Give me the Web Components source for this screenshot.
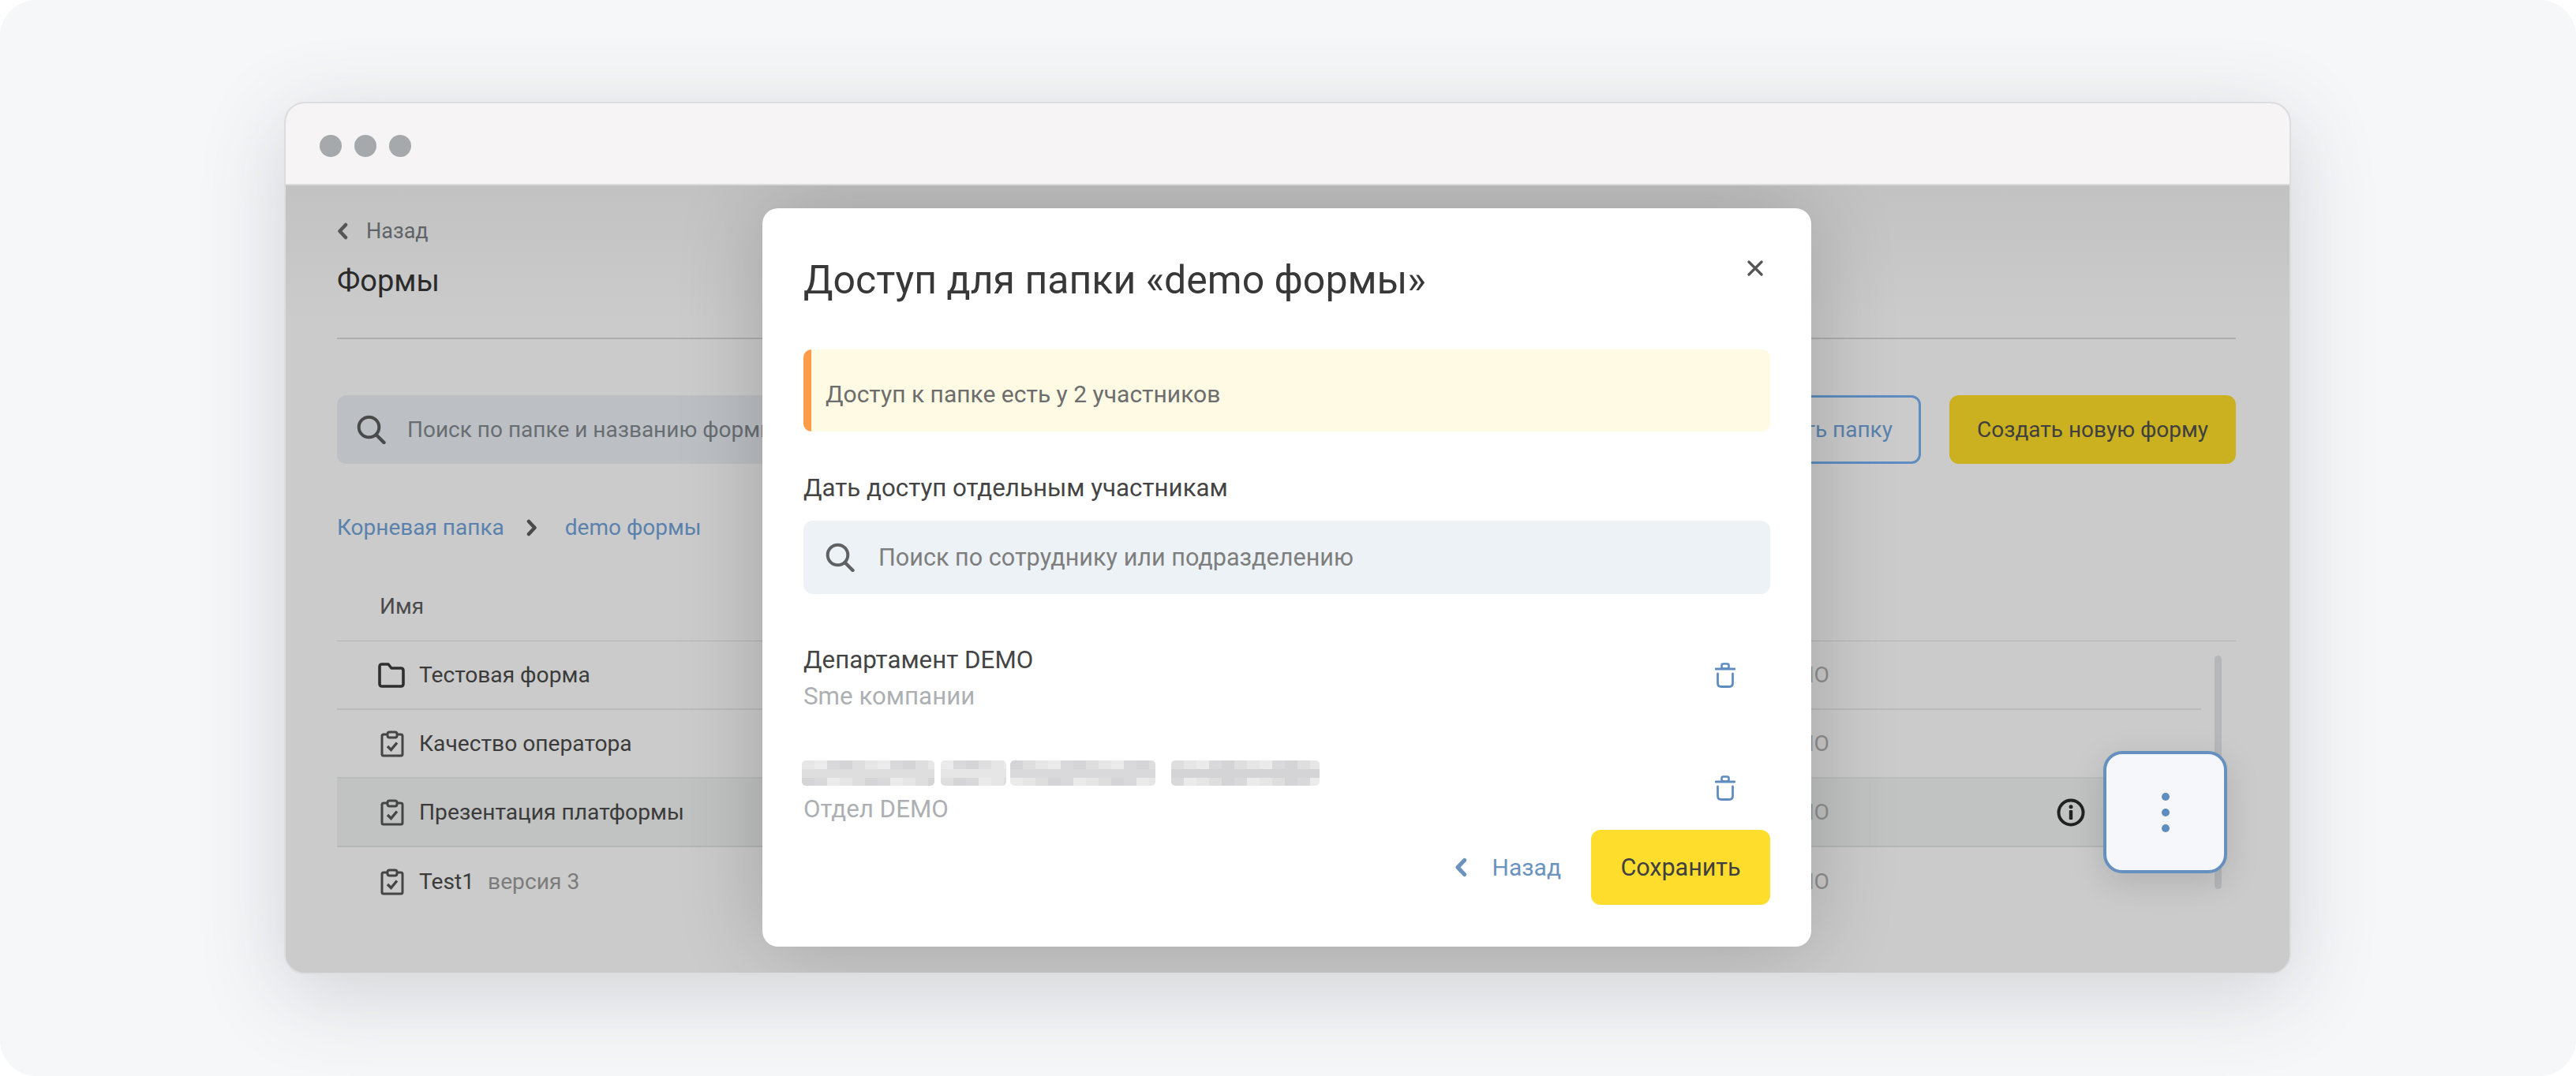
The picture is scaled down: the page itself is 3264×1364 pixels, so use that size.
<!DOCTYPE html>
<html lang="ru">
<head>
<meta charset="utf-8">
<title>Доступ для папки</title>
<style>
  html, body { margin: 0; background: #fff; }
  body { font-family: Roboto, "Liberation Sans", sans-serif; }
</style>
</head>
<body>
<demo-frame>
  <browser-window>
    <forms-page>
      <access-dialog></access-dialog>
      <more-button></more-button>
    </forms-page>
  </browser-window>
</demo-frame>

<script>
// shared icons
const icons = {
  chevronLeft: (c, w = 14, h = 22) => `<svg width="${w}" height="${h}" viewBox="0 0 14 22"><path d="M11 3 L3.5 11 L11 19" fill="none" stroke="${c}" stroke-width="4.5" stroke-linecap="round" stroke-linejoin="round"/></svg>`,
  chevronRight: (c) => `<svg width="14" height="22" viewBox="0 0 14 22"><path d="M3 3 L10.5 11 L3 19" fill="none" stroke="${c}" stroke-width="4.5" stroke-linecap="round" stroke-linejoin="round"/></svg>`,
  search: (c) => `<svg width="37" height="37" viewBox="0 0 37 37"><circle cx="15.5" cy="15.5" r="12.8" fill="none" stroke="${c}" stroke-width="4"/><path d="M24.5 25 L34.5 35" stroke="${c}" stroke-width="4.4" stroke-linecap="round"/></svg>`,
  folder: `<svg width="34" height="32" viewBox="0 0 34 32"><path d="M2 5 Q2 2 5 2 H13 L17 7 H29 Q32 7 32 10 V27 Q32 30 29 30 H5 Q2 30 2 27 Z" fill="none" stroke="#2f2f2f" stroke-width="3.6" stroke-linejoin="round"/></svg>`,
  clipboard: `<svg width="30" height="34" viewBox="0 0 30 34" style="margin-left:3px"><path d="M9 5 H4 Q2 5 2 7 V30 Q2 32 4 32 H26 Q28 32 28 30 V7 Q28 5 26 5 H21" fill="none" stroke="#454545" stroke-width="3"/><rect x="9" y="2" width="12" height="7" rx="2.5" fill="none" stroke="#454545" stroke-width="3"/><path d="M9 20 L13.5 24.5 L21 15.5" fill="none" stroke="#454545" stroke-width="3.4"/></svg>`,
  info: `<svg width="36" height="36" viewBox="0 0 36 36"><circle cx="18" cy="18" r="15.5" fill="none" stroke="#222" stroke-width="4"/><circle cx="18" cy="10.8" r="2.5" fill="#222"/><rect x="15.8" y="15" width="4.4" height="12" rx="1" fill="#222"/></svg>`,
  trash: `<svg width="26" height="32" viewBox="0 0 26 32"><rect x="8.5" y="1.5" width="9" height="6" rx="2" fill="none" stroke="#5f8dc0" stroke-width="2.6"/><path d="M1 8 H25" stroke="#5f8dc0" stroke-width="2.8" stroke-linecap="round"/><path d="M3.5 14 V26 Q3.5 30.5 8 30.5 H18 Q22.5 30.5 22.5 26 V14" fill="none" stroke="#5f8dc0" stroke-width="2.8" stroke-linecap="round"/></svg>`,
  close: `<svg width="20" height="20" viewBox="0 0 20 20"><path d="M2 2 L18 18 M18 2 L2 18" stroke="#555" stroke-width="3.2" stroke-linecap="round"/></svg>`
};

class DemoFrame extends HTMLElement {
  constructor() {
    super();
    this.attachShadow({ mode: "open" });
    this.shadowRoot.innerHTML = `
      <style>
        :host {
          display: block;
          box-sizing: border-box;
          width: 3264px;
          height: 1364px;
          padding: 129px 0 0 360px;
          background: #f6f7f9;
          border-radius: 46px;
          overflow: hidden;
        }
      </style>
      <slot></slot>
    `;
  }
}

class BrowserWindow extends HTMLElement {
  constructor() {
    super();
    this.attachShadow({ mode: "open" });
    this.shadowRoot.innerHTML = `
      <style>
        :host {
          display: flex;
          flex-direction: column;
          box-sizing: border-box;
          width: 2543px;
          height: 1106px;
          border: 2px solid #dcdde0;
          border-radius: 26px;
          overflow: hidden;
          background: #cbcbcb;
          box-shadow: 0 24px 110px rgba(60, 65, 75, 0.2);
        }
        .bar {
          flex: none;
          box-sizing: border-box;
          height: 104px;
          padding: 6px 0 0 43px;
          display: flex;
          align-items: center;
          gap: 16px;
          background: #f6f4f5;
          border-bottom: 2px solid #dbdbdb;
        }
        .bar i { width: 28px; height: 28px; border-radius: 50%; background: #a6a9ac; }
      </style>
      <div class="bar"><i></i><i></i><i></i></div>
      <slot></slot>
    `;
  }
}

class FormsPage extends HTMLElement {
  constructor() {
    super();
    this.attachShadow({ mode: "open" });
    this.shadowRoot.innerHTML = `
      <style>
        :host {
          display: block;
          position: relative;
          flex: 1;
          box-sizing: border-box;
          padding: 41px 68px 0 65px;
          overflow: hidden;
          font: 400 28px/40px Roboto, "Liberation Sans", sans-serif;
          color: #3b3b3b;
          background: linear-gradient(#c1c2c1, #cbcbcb 170px);
        }
        .back { display: flex; align-items: center; gap: 23px; height: 34px; color: #5e6468; font-size: 27px; }
        h1 {
          margin: 22px 0 0;
          padding-bottom: 48px;
          border-bottom: 2px solid #aeaeae;
          font: 400 38px/48px Roboto, "Liberation Sans", sans-serif;
          color: #2b2b2b;
        }
        .tools { display: flex; gap: 36px; margin-top: 71px; height: 87px; }
        .search {
          flex: 1;
          display: flex;
          align-items: center;
          gap: 27px;
          padding-left: 25px;
          background: #bcc0c4;
          border-radius: 12px;
          color: #686d72;
          white-space: nowrap;
          overflow: hidden;
        }
        .btn {
          display: flex;
          align-items: center;
          justify-content: center;
          box-sizing: border-box;
          border-radius: 12px;
          white-space: nowrap;
        }
        .outline { padding: 0 33px; border: 3px solid #5f8dc0; color: #5a82ad; }
        .primary { width: 363px; background: #cbb020; color: #3f3f3f; }
        .crumbs { display: flex; align-items: center; margin-top: 61px; color: #5a82ad; }
        .crumbs svg { margin: 0 35px 0 28px; }
        .head {
          margin-top: 60px;
          padding: 0 0 23px 54px;
          border-bottom: 1.5px solid #b3b3b3;
          color: #4a4a4a;
        }
        .body { display: flex; }
        .rows { width: 2362px; }
        .scroll {
          flex: none;
          width: 9px;
          height: 296px;
          margin: 18px 0 0 17px;
          border-radius: 5px;
          background: #b5b7b8;
        }
      </style>
      <div class="back">${icons.chevronLeft("#555")}<span>Назад</span></div>
      <h1>Формы</h1>
      <div class="tools">
        <div class="search">${icons.search("#4a4a4a")}<span>Поиск по папке и названию формы</span></div>
        <div class="btn outline">Создать папку</div>
        <div class="btn primary">Создать новую форму</div>
      </div>
      <div class="crumbs"><span>Корневая папка</span>${icons.chevronRight("#4a4a4a")}<span>demo формы</span></div>
      <div class="head">Имя</div>
      <div class="body">
        <div class="rows">
          <forms-row icon="folder" name="Тестовая форма"></forms-row>
          <forms-row icon="clipboard" name="Качество оператора"></forms-row>
          <forms-row icon="clipboard" name="Презентация платформы" active></forms-row>
          <forms-row icon="clipboard" name="Test1" version="версия 3" last></forms-row>
        </div>
        <div class="scroll"></div>
      </div>
      <slot></slot>
    `;
  }
}

class FormsRow extends HTMLElement {
  constructor() {
    super();
    this.attachShadow({ mode: "open" });
  }

  connectedCallback() {
    const version = this.getAttribute("version");
    this.shadowRoot.innerHTML = `
      <style>
        :host {
          display: grid;
          grid-template-columns: 52px 1fr 300px 288px 36px 147px;
          align-items: center;
          box-sizing: border-box;
          height: 87px;
          padding-left: 52px;
          border-bottom: 2px solid #bcbcbc;
          color: #3b3b3b;
          font-size: 28.2px;
        }
        :host([active]) { background: #c1c2c2; border-bottom-color: #b5b6b6; }
        :host([last]) { border-bottom: 0; }
        .icon { display: flex; height: 36px; align-items: center; }
        .name { padding-top: 1px; }
        .name span { margin-left: 17px; color: #7c7c7c; }
        .dept { text-align: right; color: #8f8f8f; padding-top: 1px; }
        .info { display: flex; }
      </style>
      <div class="icon">${icons[this.getAttribute("icon")]}</div>
      <div class="name">${this.getAttribute("name")}${version ? `<span>${version}</span>` : ""}</div>
      <div class="dept">DEMO</div>
      <div></div>
      <div class="info">${this.hasAttribute("active") ? icons.info : ""}</div>
    `;
  }
}

class MoreButton extends HTMLElement {
  constructor() {
    super();
    this.attachShadow({ mode: "open" });
    this.shadowRoot.innerHTML = `
      <style>
        :host {
          position: absolute;
          left: 2303px;
          top: 717px;
          display: flex;
          flex-direction: column;
          align-items: center;
          justify-content: center;
          gap: 10px;
          box-sizing: border-box;
          width: 157px;
          height: 155px;
          background: #f5f7fa;
          border: 4px solid #6690c0;
          border-radius: 24px;
          box-shadow: 0 12px 44px rgba(0, 0, 0, 0.13);
        }
        i { width: 10px; height: 10px; border-radius: 50%; background: #5f8dc0; }
      </style>
      <i></i><i></i><i></i>
    `;
  }
}

class AccessDialog extends HTMLElement {
  constructor() {
    super();
    this.attachShadow({ mode: "open" });
    this.shadowRoot.innerHTML = `
      <style>
        :host {
          position: absolute;
          left: 604px;
          top: 29px;
          box-sizing: border-box;
          width: 1329px;
          height: 936px;
          padding: 61px 52px 0;
          background: #fff;
          border-radius: 20px;
          box-shadow: 0 0 110px rgba(0, 0, 0, 0.2);
          font: 400 31.3px/40px Roboto, "Liberation Sans", sans-serif;
          color: #444;
        }
        .top { display: flex; justify-content: space-between; align-items: flex-start; }
        h2 { margin: 0; font: 400 50px/60px Roboto, "Liberation Sans", sans-serif; color: #383838; }
        .close { display: flex; margin: 5px 9px 0 0; }
        .alert {
          box-sizing: border-box;
          height: 104px;
          margin-top: 58px;
          padding: 10px 0 0 18px;
          display: flex;
          align-items: center;
          background: #fefae3;
          border-left: 10px solid #ff9c4a;
          border-radius: 10px;
          color: #6d6d6d;
          font-size: 30px;
        }
        .label { margin-top: 52px; font-size: 31.3px; }
        .search {
          display: flex;
          align-items: center;
          gap: 30px;
          height: 93px;
          margin-top: 21px;
          padding-left: 28px;
          background: #edf2f6;
          border-radius: 12px;
          color: #7e7e7e;
          font-size: 30.6px;
        }
        .members { margin-top: 64px; display: flex; flex-direction: column; gap: 57px; }
        .foot { display: flex; justify-content: flex-end; align-items: center; margin-top: 6px; }
        .foot .back { display: flex; align-items: center; gap: 32px; margin-right: 38px; color: #6c93bd; font-size: 30px; }
        .save {
          display: flex;
          align-items: center;
          justify-content: center;
          width: 227px;
          height: 95px;
          background: #ffdd2d;
          border-radius: 12px;
          color: #404040;
          font-size: 30.5px;
        }
      </style>
      <div class="top"><h2>Доступ для папки «demo формы»</h2><div class="close">${icons.close}</div></div>
      <div class="alert">Доступ к папке есть у 2 участников</div>
      <div class="label">Дать доступ отдельным участникам</div>
      <div class="search">${icons.search("#5f6163")}<span>Поиск по сотруднику или подразделению</span></div>
      <div class="members">
        <access-member unit="Sme компании">Департамент DEMO</access-member>
        <access-member unit="Отдел DEMO"><redacted-name></redacted-name></access-member>
      </div>
      <div class="foot">
        <div class="back">${icons.chevronLeft("#6c93bd", 16, 25)}<span>Назад</span></div>
        <div class="save">Сохранить</div>
      </div>
    `;
  }
}

class AccessMember extends HTMLElement {
  constructor() {
    super();
    this.attachShadow({ mode: "open" });
  }

  connectedCallback() {
    this.shadowRoot.innerHTML = `
      <style>
        :host { display: flex; align-items: center; justify-content: space-between; }
        .who { display: flex; flex-direction: column; gap: 6px; }
        .line { height: 40px; display: flex; align-items: center; }
        .unit { color: #adb0b3; }
        .del { display: flex; margin: 0 44px 9px 0; }
      </style>
      <div class="who">
        <div class="line"><slot></slot></div>
        <div class="line unit">${this.getAttribute("unit")}</div>
      </div>
      <div class="del">${icons.trash}</div>
    `;
  }
}

// pixelated blocks that hide a person's name
class RedactedName extends HTMLElement {
  constructor() {
    super();
    this.attachShadow({ mode: "open" });
    const tones = ["#d9d9db", "#e6e6e6", "#d4d4d6", "#ebebeb", "#dedede"];
    const block = (w, seed) => {
      let rects = "";
      for (let y = 0; y < 3; y++) {
        for (let x = 0; x * 16 < w; x++) {
          const n = (x * 7 + y * 13 + seed + x * y * 3) % tones.length;
          rects += `<rect x="${x * 16}" y="${y * 11}" width="16" height="11" fill="${tones[n]}"/>`;
        }
      }
      return `<svg width="${w}" height="32" viewBox="0 0 ${w} 32" style="border-radius:5px">${rects}</svg>`;
    };
    this.shadowRoot.innerHTML = `
      <style>
        :host { display: flex; margin-left: -2px; }
        svg { display: block; }
        svg:nth-of-type(1) { margin-right: 8px; }
        svg:nth-of-type(2) { margin-right: 5px; }
        svg:nth-of-type(3) { margin-right: 20px; }
      </style>
      ${block(168, 1)}${block(83, 3)}${block(184, 2)}${block(188, 4)}
    `;
  }
}

customElements.define("demo-frame", DemoFrame);
customElements.define("browser-window", BrowserWindow);
customElements.define("forms-page", FormsPage);
customElements.define("forms-row", FormsRow);
customElements.define("more-button", MoreButton);
customElements.define("access-dialog", AccessDialog);
customElements.define("access-member", AccessMember);
customElements.define("redacted-name", RedactedName);
</script>
</body>
</html>
